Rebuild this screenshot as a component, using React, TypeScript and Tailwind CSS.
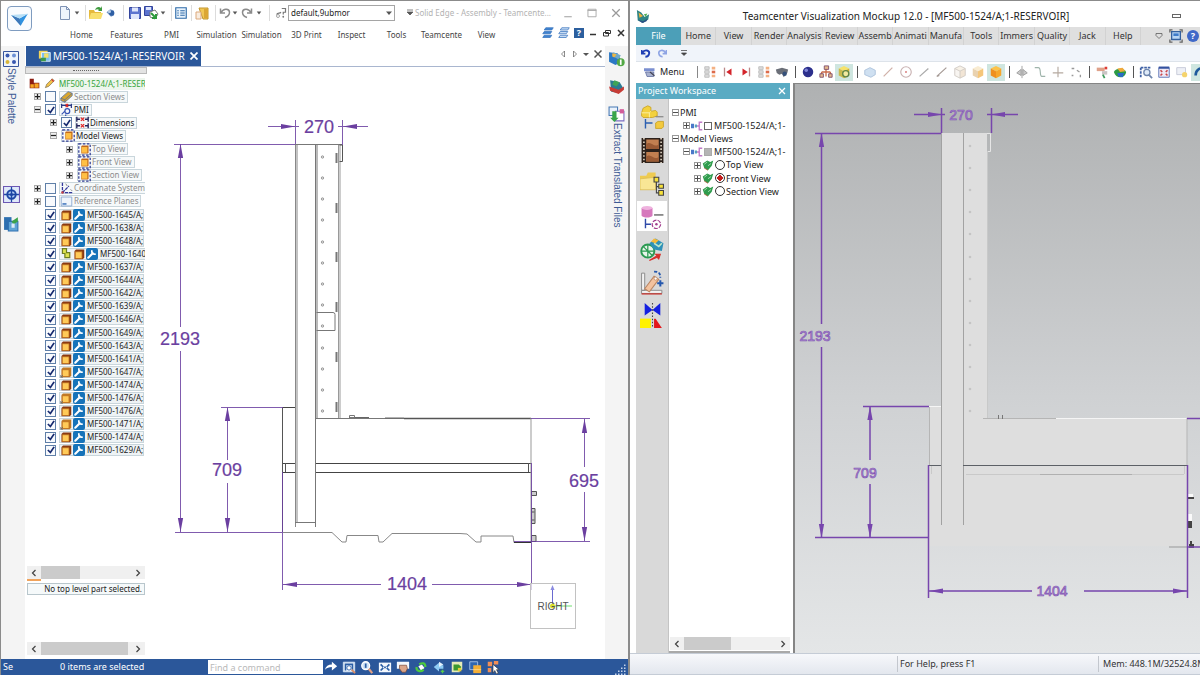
import React from "react";

type IconProps = { className?: string; children?: React.ReactNode };

function Svg({ className = "size-4", children }: IconProps) {
  return (
    <svg viewBox="0 0 16 16" className={`shrink-0 ${className}`} aria-hidden="true" fill="none">
      {children}
    </svg>
  );
}

/* ---------- shared drawing parts ---------- */

function Arrow({ x, y, dir, color }: { x: number; y: number; dir: "l" | "r" | "u" | "d"; color: string }) {
  const rot = { r: 0, d: 90, l: 180, u: 270 }[dir];
  return <path d="M0 0 L-14 -2.6 V2.6 Z" fill={color} transform={`translate(${x} ${y}) rotate(${rot})`} />;
}

const caret = <path d="M5 6h6l-3 4z" fill="#555" />;

const icons = {
  doc: (
    <Svg>
      <path d="M3.5 1.5h6l3 3v10h-9z" fill="#eef4fc" stroke="#7f93b5" />
      <path d="M9.500 1.500v3h3" stroke="#7f93b5" />
    </Svg>
  ),
  open: (
    <Svg>
      <path d="M1 5h5l1 2h6v7H1z" fill="#e5b93c" />
      <path d="M3 8h12l-2 6H1z" fill="#f8df6d" />
      <path d="M7 5c1-3 4-4 6-2l1-2v5h-4l1-1c-1-1-2-1-4 0z" fill="#3f9b3f" />
    </Svg>
  ),
  key: (
    <Svg className="size-3">
      <path d="M2 7l5-4 5 2v6l-4 2z" fill="#6f93c4" />
      <circle cx="9" cy="8" r="3.500" fill="#2f5fa4" />
      <circle cx="6" cy="6" r="2" fill="#b9cfe9" />
    </Svg>
  ),
  save: (
    <Svg>
      <path d="M2.500 2.500h11v11h-11z" fill="#5c74cf" stroke="#34459c" />
      <path d="M5 2.500h6v4H5zM4 9h8v5H4z" fill="#dfe6fb" />
    </Svg>
  ),
  saveAll: (
    <Svg>
      <path d="M1.500 1.500h8v9h-8z" fill="#5c74cf" stroke="#34459c" />
      <path d="M3 2h5v3H3z" fill="#dfe6fb" />
      <path d="M7 7l5-2 3 4-3 5-5-2z" fill="#fff" stroke="#777" />
      <path d="M8 8l5 5m-4 0h4V9" stroke="#2f9a3d" strokeWidth="2" />
    </Svg>
  ),
  list: (
    <Svg className="size-3">
      <path d="M1 1h14v14H1z" fill="#e9f3fc" stroke="#2e6aa8" strokeWidth="1.500" />
      <path d="M3 5h2m2 0h6M3 8h2m2 0h6M3 11h2m2 0h6" stroke="#2e6aa8" strokeWidth="1.500" />
    </Svg>
  ),
  panel: (
    <Svg>
      <path d="M4 3h9v11H8z" fill="#f1c755" stroke="#c2952c" />
      <path d="M1 7h5v7H1z" fill="#f8ece0" stroke="#dca97d" />
      <path d="M9 4h4v9H9z" fill="#dba634" />
    </Svg>
  ),
  undo: (
    <Svg className="size-3">
      <path d="M2 2v6h6M3 7c3-6 11-5 11 0 0 4-3 6-6 7" stroke="#8b8b8b" strokeWidth="2" />
    </Svg>
  ),
  redo: (
    <Svg className="size-3">
      <path d="M14 2v6H8m5-1C10 1 2 2 2 7c0 4 3 6 6 7" stroke="#8b8b8b" strokeWidth="2" />
    </Svg>
  ),
  find: (
    <Svg className="size-3">
      <path d="M9 2h5v5h-3v3M2 10c2-3 4-1 6-3" stroke="#777" strokeWidth="1.600" />
      <circle cx="11" cy="13" r="1.200" fill="#777" />
      <circle cx="4" cy="12" r="2" stroke="#888" />
    </Svg>
  ),
};

function Caret() {
  return (
    <button type="button" aria-label="More options" className="flex w-2 justify-center">
      <Svg className="size-3">{caret}</Svg>
    </button>
  );
}

function SepCell({ className = "w-2" }: { className?: string }) {
  return (
    <span className={`flex justify-center ${className}`}>
      <span className="h-4 w-px bg-[#dcdcdc]" />
    </span>
  );
}

function Tool({ label, className = "w-4", children }: { label: string; className?: string; children: React.ReactNode }) {
  return (
    <button type="button" aria-label={label} className={`flex shrink-0 items-center justify-center ${className}`}>
      {children}
    </button>
  );
}

/* ---------- left window: header ---------- */

const leftMenus = ["Home", "Features", "PMI", "Simulation", "Simulation", "3D Print", "Inspect", "Tools", "Teamcente", "View"];

function Layers({ faded = false }: { faded?: boolean }) {
  return (
    <Svg className="size-3">
      <path d="M5 1h10l-2 3H3zM3 6h10l-2 3H1zM3 11h10l-2 3H1z" fill={faded ? "#c8dcf4" : "#3f83d0"} stroke="#3a74bd" />
    </Svg>
  );
}

function LeftHeader() {
  return (
    <header className="flex h-[45px] shrink-0">
      <button type="button" aria-label="Application menu" className="mt-[5px] ml-[6px] flex size-[25px] items-center justify-center rounded-sm border border-[#7f9cc0] bg-[#f8fbfe]">
        <Svg className="size-[19px]">
          <path d="M1 5l7 3 7-4-6 10z" fill="#2f92e0" />
          <path d="M1 5l7 3 1 6z" fill="#3f78b8" />
          <path d="M1 5l14-1-7 4z" fill="#b8dff6" />
        </Svg>
      </button>
      <div className="ml-[25px] min-w-0 flex-1">
        <div className="flex h-[23px] items-center">
          <Tool label="New">{icons.doc}</Tool>
          <Caret />
          <SepCell />
          <Tool label="Open" className="w-3.5">{icons.open}</Tool>
          <Tool label="Search">{icons.key}</Tool>
          <SepCell />
          <Tool label="Save">{icons.save}</Tool>
          <Tool label="Save all">{icons.saveAll}</Tool>
          <Caret />
          <SepCell />
          <Tool label="Properties" className="w-3">{icons.list}</Tool>
          <SepCell />
          <Tool label="Panels">{icons.panel}</Tool>
          <SepCell />
          <Tool label="Undo" className="w-3">{icons.undo}</Tool>
          <Caret />
          <Tool label="Redo">{icons.redo}</Tool>
          <Caret />
          <SepCell className="w-3" />
          <Tool label="Find" className="w-3">{icons.find}</Tool>
          <div className="ml-px grid w-[107px] shrink-0">
            <select aria-label="Configuration" className="col-start-1 row-start-1 h-4 appearance-none border border-[#a5a5a5] bg-white px-0.5 text-[8px] leading-[14px] text-[#222]">
              <option>default,9ubmor</option>
            </select>
            <Svg className="pointer-events-none col-start-1 row-start-1 mr-0.5 size-2 self-center justify-self-end">
              <path d="M2 5h12l-6 7z" fill="#555" />
            </Svg>
          </div>
          <div className="ml-2.5 flex w-2.5 justify-center">
            <Svg className="size-2"><path d="M2 2h12M2 6h12l-6 6z" stroke="#555" fill="#555" strokeWidth="1.500" /></Svg>
          </div>
          <h1 className="min-w-0 flex-1 truncate text-[8px] text-[#b3b3b3]">Solid Edge - Assembly - Teamcente...</h1>
          <div className="flex">
            <Tool label="Minimize window" className="w-6"><Svg className="size-2.5"><path d="M2 14h12" stroke="#999" strokeWidth="1.500" /></Svg></Tool>
            <Tool label="Maximize window" className="w-6"><Svg className="size-2.5"><path d="M1.500 2h13v12h-13zM1 4h14" stroke="#aaa" strokeWidth="1.500" /></Svg></Tool>
            <Tool label="Close window" className="w-6"><Svg className="size-2.5"><path d="M2 2l12 12M14 2L2 14" stroke="#999" strokeWidth="2" /></Svg></Tool>
          </div>
        </div>
        <div className="flex h-[22px] items-center justify-between">
          <nav className="ml-0.5 flex">
            {leftMenus.map((m, i) => (
              <a key={i} href="#menu" className="w-[45px] text-center text-[8px] whitespace-nowrap text-[#444]">
                {m}
              </a>
            ))}
          </nav>
          <div className="flex items-center gap-1 pr-0.5 pb-1">
            <Tool label="Window styles" className="w-3"><Layers /></Tool>
            <Tool label="Arrange windows" className="w-3"><Layers faded /></Tool>
            <Tool label="Help" className="h-2.5 w-2.5 bg-[#2c5f9e] text-[9px] font-bold text-white">?</Tool>
            <Tool label="Minimize document" className="w-2.5"><Svg className="size-2"><path d="M2 11h12" stroke="#333" strokeWidth="3" /></Svg></Tool>
            <Tool label="Restore document" className="w-2.5"><Svg className="size-2"><path d="M5 3h10v6H5zM1 7h10v7H1z" fill="#fff" stroke="#333" strokeWidth="2" /></Svg></Tool>
            <Tool label="Close document" className="w-2.5"><Svg className="size-2"><path d="M2 2l12 12M14 2L2 14" stroke="#333" strokeWidth="3" /></Svg></Tool>
          </div>
        </div>
      </div>
    </header>
  );
}

/* ---------- left window: tree ---------- */

type Kind = "root" | "section" | "pmi" | "dims" | "views" | "view" | "coord" | "plane" | "part" | "sketch" | "link";
type Row = { label: string; kind: Kind; depth: number; exp?: "+" | "-"; check?: boolean; muted?: boolean };

const parts: [string, Kind][] = [
  ["MF500-1645/A;", "part"], ["MF500-1638/A;", "part"], ["MF500-1648/A;", "part"], ["MF500-1640/A;", "link"],
  ["MF500-1637/A;", "part"], ["MF500-1644/A;", "part"], ["MF500-1642/A;", "part"], ["MF500-1639/A;", "part"],
  ["MF500-1646/A;", "part"], ["MF500-1649/A;", "part"], ["MF500-1643/A;", "part"], ["MF500-1641/A;", "part"],
  ["MF500-1647/A;", "sketch"], ["MF500-1474/A;", "part"], ["MF500-1476/A;", "sketch"], ["MF500-1476/A;", "part"],
  ["MF500-1471/A;", "sketch"], ["MF500-1474/A;", "part"], ["MF500-1629/A;", "part"],
];

const treeRows: Row[] = [
  { label: "Section Views", kind: "section", depth: 0, exp: "+", check: false, muted: true },
  { label: "PMI", kind: "pmi", depth: 0, exp: "-", check: true },
  { label: "Dimensions", kind: "dims", depth: 1, exp: "+", check: true },
  { label: "Model Views", kind: "views", depth: 1, exp: "-" },
  { label: "Top View", kind: "view", depth: 2, exp: "+", muted: true },
  { label: "Front View", kind: "view", depth: 2, exp: "+", muted: true },
  { label: "Section View", kind: "view", depth: 2, exp: "+", muted: true },
  { label: "Coordinate Systems", kind: "coord", depth: 0, exp: "+", check: false, muted: true },
  { label: "Reference Planes", kind: "plane", depth: 0, exp: "+", check: false, muted: true },
  ...parts.map(([label, kind]) => ({ label, kind, depth: 0, check: true })),
];

function PartBox({ sketch = false }: { sketch?: boolean }) {
  return (
    <Svg className="size-3">
      <path d="M2 4l2-2h11v11l-2 2H2z" fill={sketch ? "#c07a26" : "#8a3a12"} />
      <path d="M3 5h9v9H3z" fill="#ffca58" stroke="#b96a1c" />
      {sketch && <path d="M1 15l3-3M1 12v3h3" stroke="#666" />}
    </Svg>
  );
}

function KindIcon({ kind }: { kind: Kind }) {
  switch (kind) {
    case "section":
      return <Svg className="size-[13px]"><path d="M1 10l9-8 5 2v3l-9 8-5-2z" fill="#d9a62e" stroke="#58709c" /><path d="M1 10l5 2 9-8M6 12v3" stroke="#58709c" /></Svg>;
    case "pmi":
      return <Svg className="size-[13px]"><path d="M2 1v5M14 1v5M2 3h12" stroke="#2b3a86" strokeWidth="1.500" /><path d="M7 1l3 4M10 1L7 5" stroke="#d22" strokeWidth="1.500" /><circle cx="9" cy="10" r="3" stroke="#3754b3" strokeWidth="1.500" /><path d="M2 14l4-4M7 14v2" stroke="#3754b3" strokeWidth="1.500" /></Svg>;
    case "dims":
      return <Svg className="size-[13px]"><path d="M1 1v6M15 1v6M1 4h4M11 4h4M1 9v6M15 9v6M1 12h4M11 12h4" stroke="#26265e" strokeWidth="1.700" /><path d="M6 2l4 4M10 2L6 6M6 10l4 4M10 10l-4 4" stroke="#e02a2a" strokeWidth="1.700" /></Svg>;
    case "views":
    case "view":
      return <Svg className="size-[13px]"><rect x="1" y="1" width="14" height="14" stroke="#2f3a93" strokeWidth="1.500" strokeDasharray="3 2" /><path d="M4 4l1-1h8v9l-1 1H4z" fill="#c1691a" /><path d="M4.500 5h7v7h-7z" fill="#ffc044" /></Svg>;
    case "coord":
      return <Svg className="size-[13px]"><path d="M3 1v12h12M3 13L11 5" stroke="#34399c" strokeWidth="1.600" strokeDasharray="4 1" /><circle cx="3" cy="13" r="1.500" fill="#c44" /><path d="M7 2l2 3m4 4l2 2" stroke="#777" /></Svg>;
    case "plane":
      return <Svg className="size-[13px]"><path d="M1.500 2.500h13v11h-13z" fill="#eff5fb" stroke="#7fa0cc" /><path d="M3 11h5" stroke="#4a7cc0" strokeWidth="2" /></Svg>;
    default:
      return <PartBox sketch={kind === "sketch"} />;
  }
}

function Wrench() {
  return (
    <Svg className="ml-px size-3 rounded-xs bg-[#1673b9]">
      <path d="M3 13l6-6" stroke="#fff" strokeWidth="2.800" strokeLinecap="round" />
      <path d="M8 3c-1 3 1 6 5 5" stroke="#fff" strokeWidth="2.400" />
    </Svg>
  );
}

function CheckBox({ label, checked }: { label: string; checked: boolean }) {
  return (
    <label className="grid size-[11px] shrink-0 place-items-center">
      <input
        type="checkbox"
        aria-label={label}
        defaultChecked={checked}
        className="peer col-start-1 row-start-1 size-[11px] appearance-none border border-[#5f7fa8] bg-[#f8fafd]"
      />
      <Svg className="pointer-events-none col-start-1 row-start-1 hidden size-2.5 peer-checked:block">
        <path d="M3 8l4 4 6-9" stroke="#15296e" strokeWidth="2.800" />
      </Svg>
    </label>
  );
}

function Expander({ sign }: { sign: "+" | "-" }) {
  return (
    <button type="button" aria-label={sign === "+" ? "Expand" : "Collapse"} className="flex size-[7px] shrink-0 items-center justify-center border border-[#a9a9a9] bg-[#f0f0f0]">
      <Svg className="size-[5px]">
        <path d={sign === "+" ? "M0 8h16M8 0v16" : "M0 8h16"} stroke="#222" strokeWidth="4" />
      </Svg>
    </button>
  );
}

function TreeRow({ row }: { row: Row }) {
  const isPart = row.kind === "part" || row.kind === "sketch" || row.kind === "link";
  const indent = ["pl-[7px]", "pl-[23px]", "pl-[39px]"][row.depth];
  return (
    <li className={`flex min-h-0 items-center ${indent}`}>
      <span className="flex w-[11px] shrink-0">{row.exp && <Expander sign={row.exp} />}</span>
      {row.check !== undefined && (
        <span className="flex w-3.5 shrink-0">
          <CheckBox label={`Show ${row.label}`} checked={row.check} />
        </span>
      )}
      <span className={`flex h-3 shrink-0 items-center border border-[#c9d6dc] whitespace-nowrap ${isPart ? "bg-[#eef3f5]" : "bg-[#f6f9fa] pr-0.5"}`}>
        {row.kind === "link" && (
          <Svg className="size-[13px]"><path d="M3 2h5v5h4v6H6V8H3z" fill="#dbe24f" stroke="#6d7d22" strokeWidth="1.500" /></Svg>
        )}
        <KindIcon kind={row.kind} />
        {isPart && <Wrench />}
        <span className={`text-[8px] leading-[10px] ${isPart ? "pl-0.5 text-[#222]" : row.muted ? "pl-px text-[#8d8d8d]" : "pl-px text-[#222]"}`}>{row.label}</span>
      </span>
    </li>
  );
}

function HScroll({ thumb, label }: { thumb: string; label: string }) {
  return (
    <div className="flex h-[13px] items-stretch bg-[#f0f0f0]" role="group" aria-label={label}>
      <Tool label="Scroll left" className="w-3.5"><Svg className="size-2"><path d="M11 2L5 8l6 6" stroke="#444" strokeWidth="2.500" /></Svg></Tool>
      <div className="flex-1"><div className={`h-full bg-[#cbcbcb] ${thumb}`} /></div>
      <Tool label="Scroll right" className="w-3.5"><Svg className="size-2"><path d="M5 2l6 6-6 6" stroke="#444" strokeWidth="2.500" /></Svg></Tool>
    </div>
  );
}

function LeftTree() {
  return (
    <aside className="flex w-[122px] shrink-0 flex-col">
      <div className="flex h-[7px] shrink-0 items-center justify-center border border-[#b9b9b9] bg-[#e3e3e3]">
        <span className="w-[26px] border-t border-dotted border-[#666]" />
      </div>
      <div className="mt-[3px] mr-0.5 ml-0.5 shrink-0 overflow-hidden">
        <ul className="grid h-[380px] auto-rows-fr">
          <li className="flex items-center gap-1 pl-0.5">
            <Svg className="size-[11px]"><path d="M1 1h6v6h8v8H1z" fill="#8c1d12" /><path d="M8 8h6v6H8zM2 9h5v5H2z" fill="#f5a623" /></Svg>
            <Svg className="size-[11px]"><path d="M2 14l2-5 8-8 3 3-8 8z" fill="#f2c34a" stroke="#7a6a4a" /><path d="M11 2l3 3" stroke="#c33" strokeWidth="2" /></Svg>
            <span className="bg-[#edf6ed] text-[8px] leading-[12px] whitespace-nowrap text-[#35a53a]">MF500-1524/A;1-RESERVOIR</span>
          </li>
          {treeRows.map((row, i) => (
            <TreeRow key={i} row={row} />
          ))}
        </ul>
      </div>
      <div className="mt-auto mr-0.5 ml-0.5 shrink-0 pb-1">
        <HScroll label="Tree scroll" thumb="w-[43%]" />
        <div className="h-0.5 w-3.5 bg-[#f0a35c]" />
        <p className="mt-0.5 h-3 border border-[#b8c6cc] bg-[#f5f9fa] pr-0.5 text-right text-[8px] leading-[10px] whitespace-nowrap text-[#222]">No top level part selected.</p>
        <div className="mt-[47px]">
          <HScroll label="Details scroll" thumb="w-[97%]" />
        </div>
      </div>
    </aside>
  );
}

/* ---------- left window: drawing ---------- */

const VIOLET = "#6b3fa0";
const holes = [157, 178, 199, 220, 242, 263, 284, 305, 326, 348, 369, 390, 411];
const hinges = [153, 203, 252, 302, 352, 402];

function LeftDrawing() {
  return (
    <svg viewBox="147 67 458 592" preserveAspectRatio="xMinYMin meet" className="h-full w-full" role="img" aria-label="Right view of reservoir with dimensions">
      <g fill="none" stroke="#777" strokeWidth="1">
        <path d="M295.500 144V527M297 144V522" stroke="#888" />
        <path d="M315.500 144V527M317 144V418" stroke="#777" />
        <path d="M295 144.500H342M295 522.500H316" />
        <path d="M338.500 145V418M340 145V418" stroke="#999" />
        <path d="M339.500 145H342.500V161.500H339.500" stroke="#555" />
        <path d="M316.500 312.500H333q2 0 2 2V330.500H316.500" />
        <path d="M316 418.500H404" />
        <path d="M404 418.500H531" stroke="#555" strokeWidth="1.500" />
        <path d="M385 418H404M349 417.500h20" stroke="#666" strokeWidth="1" />
        <path d="M349.500 415.500h5v2h-5z" stroke="#777" />
        <path d="M283 407.500H295M283 463.500H295M283 472.500H295M316 463.500H531M316 472.500H531" stroke="#444" />
        <path d="M282.500 407V532M285.500 463V472M528.500 463V472" stroke="#555" />
        <path d="M531 418V542" stroke="#999" />
        <path d="M283 532.500H332L342 542H346L347 535.500H378L379 542H383L392 533.500H460L467 534 476 542H481V536H513L514 542.500" stroke="#888" />
        <path d="M514 542.500H531" stroke="#333" />
        <path d="M531.500 491.500h5v4h-5zM531.500 508.500h3.500v15h-3.500zM531.500 512h3M531.500 520h3M531.500 535.500h4.500v6h-4.500z" stroke="#555" fill="#ccc" />
        {hinges.map((y) => (
          <path key={y} d={`M336.500 ${y}v10`} stroke="#777" strokeWidth="2" />
        ))}
      </g>
      {holes.map((y) => (
        <circle key={y} cx="322.500" cy={y} r="1.200" fill="#ddd" stroke="#888" strokeWidth="0.800" />
      ))}
      <g stroke={VIOLET} strokeWidth="1" fill="none" opacity="0.850">
        <path d="M268 126.500H299M338 126.500H368M295.500 120V144M342.500 120V145" />
        <path d="M174 144.500H295M180.500 144V327M180.500 351V532M175 532.500H283" />
        <path d="M221 407.500H283M227.500 407V460M227.500 483V532" />
        <path d="M531 418.500H590M514 541.500H590M584.500 418V467M584.500 492V541" />
        <path d="M282.500 472V590M531.500 463V590M283 584.500H381M432 584.500H531" />
      </g>
      <Arrow x={295} y={126.500} dir="r" color={VIOLET} />
      <Arrow x={343} y={126.500} dir="l" color={VIOLET} />
      <Arrow x={180.500} y={144} dir="u" color={VIOLET} />
      <Arrow x={180.500} y={532} dir="d" color={VIOLET} />
      <Arrow x={227.500} y={407} dir="u" color={VIOLET} />
      <Arrow x={227.500} y={532} dir="d" color={VIOLET} />
      <Arrow x={584.500} y={419} dir="u" color={VIOLET} />
      <Arrow x={584.500} y={541} dir="d" color={VIOLET} />
      <Arrow x={283} y={584.500} dir="l" color={VIOLET} />
      <Arrow x={531} y={584.500} dir="r" color={VIOLET} />
      <g fill={VIOLET} stroke={VIOLET} strokeWidth="0.200" className="font-['Liberation_Sans',Arial,sans-serif] text-[18px]" textAnchor="middle">
        <text x="319" y="133">270</text>
        <text x="180" y="345">2193</text>
        <text x="227" y="476">709</text>
        <text x="584" y="487">695</text>
        <text x="407" y="590">1404</text>
      </g>
      <rect x="530.500" y="583.500" width="45" height="45" fill="#fff" fillOpacity="0.700" stroke="#c2c2c2" />
      <path d="M552.500 606V588" stroke="#6a6ad0" />
      <path d="M552.500 585l-2 5h4z" fill="#8a8ae0" />
      <path d="M553 606H572" stroke="#6fdd6f" />
      <circle cx="552.500" cy="606" r="2.500" fill="#d9e02a" />
      <text x="553" y="610" textAnchor="middle" fill="#555" className="font-['Liberation_Sans',Arial,sans-serif] text-[10px]">RIGHT</text>
    </svg>
  );
}

/* ---------- left window: rails and status ---------- */

function LeftRail() {
  return (
    <aside className="flex w-[24px] shrink-0 flex-col items-center bg-[#f4f4f4] pt-[5px] pr-1">
      <Tool label="Style palette" className="w-4">
        <Svg className="size-[16px]">
          <path d="M.5.5h15v15H.5z" fill="#eef3fb" stroke="#38569e" />
          <circle cx="4.500" cy="4.500" r="2" fill="#3858b0" /><circle cx="11" cy="4.500" r="2" fill="#6c90d5" /><circle cx="4.500" cy="11" r="2" fill="#d7b53a" /><circle cx="11" cy="11" r="2" fill="#3858b0" />
        </Svg>
      </Tool>
      <span className="mt-px h-[118px] font-['Liberation_Sans',Arial,sans-serif] text-[10px] leading-3 whitespace-nowrap text-[#3d5a94] [writing-mode:vertical-rl]">Style Palette</span>
      <Tool label="Sensors" className="w-4">
        <Svg className="size-[17px]">
          <path d="M.5.5h15v15H.5z" fill="#dfe9fa" stroke="#6c58b4" />
          <circle cx="8" cy="8" r="4" fill="#a9c6f0" stroke="#1d46a4" strokeWidth="1.800" />
          <path d="M8 1v14M1 8h14" stroke="#1d46a4" strokeWidth="1.200" />
          <circle cx="8" cy="8" r="1.500" fill="#1d46a4" />
        </Svg>
      </Tool>
      <Tool label="Part library" className="mt-3 w-4">
        <Svg className="size-[17px]">
          <path d="M1 2h7v12H1z" fill="#2d6fb0" /><path d="M5 6h9v9H5z" fill="#5fa4d6" stroke="#2d6fb0" />
          <path d="M8 6l6-4v4l-4 3z" fill="#3ba34b" /><path d="M8 8h3v4H8z" fill="#dcebf7" />
        </Svg>
      </Tool>
    </aside>
  );
}

function RightRail() {
  return (
    <aside className="flex w-[23px] shrink-0 flex-col items-center bg-[#f4f4f4] pt-1">
      <Tool label="Item info" className="w-4">
        <Svg className="size-[17px]">
          <path d="M1 2l8 1 4 8-6 3-6-3z" fill="#2c78c4" /><path d="M5 2l7 3-2 4-5-3z" fill="#6fa9c9" /><path d="M4 3l4 1-2 3-2-1z" fill="#edb643" />
          <circle cx="12" cy="11.500" r="3.700" fill="#53a845" /><path d="M12 9v5" stroke="#fff" strokeWidth="1.600" />
        </Svg>
      </Tool>
      <Tool label="Publish" className="mt-[11px] w-4">
        <Svg className="size-[17px]">
          <path d="M2 2l9 2 3 5-4 5-7-1z" fill="#2b7b93" /><path d="M1 8l9 3 5-3v3l-5 4-8-3z" fill="#c63c36" /><path d="M6 2l5 2-3 4-4-2z" fill="#3ea457" />
        </Svg>
      </Tool>
      <Tool label="Extract translated files" className="mt-[11px] w-4">
        <Svg className="size-[17px]">
          <path d="M1 1h8v8H1z" fill="#eaf2fb" stroke="#4678b4" /><path d="M7 5h8v9H7z" fill="#fff" stroke="#7a6cc0" />
          <path d="M4 5v6H2l4 4 4-4H8V5z" fill="#38a54a" /><path d="M11 3h4v4h-4z" fill="#d25c9a" />
        </Svg>
      </Tool>
      <span className="font-['Liberation_Sans',Arial,sans-serif] text-[10px] leading-3 whitespace-nowrap text-[#3d5a94] [writing-mode:vertical-rl]">Extract Translated Files</span>
    </aside>
  );
}

const statusIcons: [string, React.ReactNode][] = [
  ["Run command", <path key="a" d="M1 11c1-4 4-6 8-6V2l6 5-6 5V8C6 8 3 9 1 11z" fill="#fff" />],
  ["Zoom area", <g key="b"><path d="M1.500 2.500h13v11h-13z" fill="#e8f1fb" stroke="#cfe0f2" /><path d="M4 12V5h8v7" stroke="#2b5fa6" strokeWidth="1.800" /><circle cx="8" cy="9" r="2.500" fill="#fff" stroke="#2b5fa6" /><path d="M11 11l4 4" stroke="#d98b62" strokeWidth="2" /></g>],
  ["Zoom", <g key="c"><circle cx="6.500" cy="6.500" r="4.500" fill="#cfe2f6" stroke="#fff" strokeWidth="1.500" /><path d="M6.500 4v5" stroke="#2b5fa6" strokeWidth="2" /><path d="M10 10l4 5" stroke="#e2a083" strokeWidth="2.500" /></g>],
  ["Fit", <g key="d"><path d="M1 3h14v11H1z" fill="#f4f8fd" /><path d="M3 5l3 3M13 5l-3 3M3 12l3-3M13 12l-3-3M7 8.500h2" stroke="#2b5fa6" strokeWidth="2" /></g>],
  ["Pan", <g key="e"><path d="M1 2h14v8H1z" fill="#f4f8fd" /><path d="M4 6h8l1 4-2 4H7L4 10z" fill="#dba589" stroke="#7a4a38" strokeWidth=".8" /></g>],
  ["Rotate", <g key="f"><path d="M5 7l4-2 3 4-4 3z" fill="#fff" /><path d="M3 8c-1 5 5 6 8 3M13 8c0-5-4-5-7-3" stroke="#4ccb3d" strokeWidth="2.500" /></g>],
  ["Look at face", <g key="g"><path d="M2 8l6-5v3h5v4H8v3z" fill="#8ecbf3" /><path d="M8 2l5 3-5 3z" fill="#e4f3fd" /><path d="M12 11v4M10 13h4" stroke="#56cb4c" strokeWidth="1.500" /></g>],
  ["View style", <g key="h"><path d="M2 2h12v9h-3v3H2z" fill="#e6ecb8" /><path d="M4 5h6l3 3-3 4H4z" fill="#3c9a2e" /><path d="M9 9h4v4H9z" fill="#e4cf3c" /></g>],
  ["Layers", <g key="i"><path d="M2 2h9v9H2z" fill="#2f66b1" stroke="#a9c6ea" /><path d="M6 6h9v9H6z" fill="#f3ae36" /><path d="M6 11h9" stroke="#ffd682" /></g>],
  ["Select tool", <g key="j"><path d="M2 2h5v5H2zM9 1h5v4H9zM2 9h4v5H2z" fill="#f28f56" /><path d="M8 5v10l2-3 2 4 2-1-2-4h3z" fill="#fff" stroke="#333" strokeWidth=".7" /></g>],
];

function LeftStatus() {
  return (
    <footer className="flex h-4 shrink-0 items-center bg-[#2b579a] text-white">
      <span className="w-[59px] pl-0.5 text-[9px]">Se</span>
      <span className="w-[148px] text-[9px] whitespace-nowrap">0 items are selected</span>
      <input aria-label="Find a command" placeholder="Find a command" className="h-3.5 w-[115px] bg-white px-0.5 text-[9px] text-[#333] outline-none placeholder:text-[#b9b9b9]" />
      <div className="flex gap-0.5">
        {statusIcons.map(([label, art]) => (
          <Tool key={label} label={label}><Svg className="size-3.5">{art}</Svg></Tool>
        ))}
      </div>
      <Svg className="mr-px ml-auto size-3 self-end">
        {[[12, 3], [12, 7], [8, 7], [12, 11], [8, 11], [4, 11], [12, 15], [8, 15], [4, 15], [0, 15]].map(([x, y], i) => (
          <rect key={i} x={x} y={y - 1} width="2" height="2" fill="#c5d3ea" />
        ))}
      </Svg>
    </footer>
  );
}

function LeftWindow() {
  return (
    <section className="flex w-[52.500%] shrink-0 flex-col border-t border-r-2 border-l border-[#8b8b8b] bg-white">
      <LeftHeader />
      <div className="flex min-h-0 flex-1">
        <LeftRail />
        <div className="flex min-w-0 flex-1 flex-col">
          <div className="flex h-[21px] shrink-0 items-stretch justify-between border-b border-[#a9b6cf]">
            <div className="ml-px flex w-[175px] items-center bg-[#2b579a] pl-3 text-white">
              <Svg className="size-[14px]"><path d="M1 2h10v9H1z" fill="#f2d45a" /><path d="M4 4h10v10H4z" fill="#7fc0ec" stroke="#e9f4fc" /><path d="M7 5h5v5H7z" fill="#f5e06a" /><path d="M3 10h6v4H3z" fill="#3d9a49" /></Svg>
              <span className="flex-1 pl-px text-[10px] whitespace-nowrap">MF500-1524/A;1-RESERVOIR</span>
              <Tool label="Close tab" className="w-3.5"><Svg className="size-2"><path d="M1 1l14 14M15 1L1 15" stroke="#fff" strokeWidth="3.500" /></Svg></Tool>
            </div>
            <div className="flex items-center pb-1">
              <Tool label="Previous tab" className="w-3"><Svg className="size-2"><path d="M11 2v12L5 8z" stroke="#666" strokeWidth="1.500" /></Svg></Tool>
              <Tool label="Next tab" className="w-3"><Svg className="size-2"><path d="M5 2v12l6-6z" stroke="#666" strokeWidth="1.500" /></Svg></Tool>
              <Tool label="Tab list" className="w-2.5"><Svg className="size-2"><path d="M2 6h12l-6 6z" fill="#555" /></Svg></Tool>
              <Tool label="Close document tab" className="w-3.5"><Svg className="size-2"><path d="M1 1l14 14M15 1L1 15" stroke="#555" strokeWidth="3" /></Svg></Tool>
            </div>
          </div>
          <div className="flex min-h-0 flex-1">
            <LeftTree />
            <main className="min-w-0 flex-1"><LeftDrawing /></main>
          </div>
        </div>
        <RightRail />
      </div>
      <LeftStatus />
    </section>
  );
}

/* ---------- right window ---------- */

const ribbonTabs = ["Home", "View", "Render", "Analysis", "Review", "Assemb", "Animati", "Manufa", "Tools", "Immers", "Quality", "Jack", "Help"];

const cube = (top: string, left: string, right: string) => (
  <g>
    <path d="M8 1l6 3-6 3-6-3z" fill={top} /><path d="M2 4l6 3v8l-6-3z" fill={left} /><path d="M14 4L8 7v8l6-3z" fill={right} />
  </g>
);
const listArt = <g><path d="M2 2h5v3H2zM2 6.500h5v3H2zM2 11h5v3H2z" fill="#ddd" stroke="#bbb" /><path d="M10 2h4v3h-4zM10 11h4v3h-4z" fill="#f4b183" /><path d="M10 6.500h4v3h-4z" fill="#dd6a4a" /></g>;

type BarItem = "sep" | { name: string; art: React.ReactNode; on?: boolean };
const bar: BarItem[] = [
  { name: "Structure list", art: listArt },
  { name: "Previous", art: <g><path d="M4 3v10" stroke="#b88" strokeWidth="1.500" /><path d="M12 4v8L6 8z" fill="#d4242b" /></g> },
  { name: "Next", art: <g><path d="M12 3v10" stroke="#b88" strokeWidth="1.500" /><path d="M4 4v8l6-4z" fill="#d4242b" /></g> },
  { name: "Item list", art: listArt },
  { name: "Binoculars", art: <g><path d="M1 5l7-2 7 2-1 4-4 5-2-4-3 1-3-2z" fill="#6b6f78" /><circle cx="11" cy="10" r="2.500" fill="#35507a" /></g> },
  "sep",
  { name: "Shaded", art: <g><circle cx="8" cy="8" r="6" fill="#2c2f8c" /><circle cx="6" cy="6" r="2" fill="#7f85d8" /></g> },
  { name: "Structure", art: <g><path d="M3 8h10M8 3v10M3 8v4M13 8v4" stroke="#c96a4a" strokeWidth="1.500" /><path d="M6 1h5v4H6zM1 10h4v4H1zM11 10h4v4h-4z" fill="#e6b98c" stroke="#7a4a6a" /></g> },
  { name: "Model", on: true, art: <g>{cube("#f6e26a", "#c9b94d", "#d5b12b")}<circle cx="10" cy="10" r="3.500" fill="#f2e9a0" stroke="#5d8448" strokeWidth="1.500" /></g> },
  "sep",
  { name: "Surface", art: <path d="M2 6l6-3 6 3v5l-5 3-7-3z" fill="#cfe0f1" stroke="#a9c0da" /> },
  { name: "Line", art: <path d="M3 13L13 3" stroke="#d0b0a8" strokeWidth="1.500" /> },
  { name: "Circle", art: <g><circle cx="8" cy="8" r="6" stroke="#c9b2b2" strokeWidth="1.300" /><circle cx="8" cy="8" r="1.200" fill="#d88" /></g> },
  { name: "Segment", art: <path d="M3 13L13 4" stroke="#a9a9a9" strokeWidth="1.400" /> },
  { name: "Edge", art: <path d="M2 13L13 3M2 13l3-1" stroke="#a59a95" strokeWidth="1.400" /> },
  { name: "Wire cube", art: <g opacity=".8">{cube("#f7efe2", "#f7f3ee", "#efdfcb")}<path d="M8 1l6 3v8l-6 3-6-3V4z M2 4l6 3 6-3M8 7v8" stroke="#c5bdb5" /></g> },
  { name: "Lit cube", art: cube("#f9ecd2", "#e9d2b0", "#f5c67a") },
  { name: "Solid cube", on: true, art: cube("#fcc34a", "#ef8f1e", "#f7a62a") },
  "sep",
  { name: "Mirror", art: <path d="M8 1v14M2 9l5-4v7zM14 9L9 5v7z" fill="#c9c9c9" stroke="#9a9a9a" /> },
  { name: "Curve", art: <path d="M2 3h4c4 0 1 10 4 10h4" stroke="#9fb4ab" strokeWidth="1.300" /> },
  { name: "Crosshair", art: <path d="M8 2v12M2 9h12" stroke="#b5a9a0" strokeWidth="1.300" /> },
  { name: "Points", art: <path d="M3 4h3m3 2l3 2m1 3v3M3 12h2" stroke="#999" strokeWidth="1.500" /> },
  "sep",
  { name: "Paint", art: <g><path d="M2 3h9v4H2z" fill="#dfa18a" /><path d="M8 7h6v4H8z" fill="#c9c4c4" /><path d="M11 2h3v3h-3z" fill="#de3d34" /><path d="M9 11l2 4" stroke="#3e9b5b" strokeWidth="2" /></g> },
  { name: "Globe", art: <g><path d="M1 8c2-5 12-5 14 0-1 8-12 8-14 0z" fill="#2c9a43" /><path d="M5 9l8 0-2 5-5-1z" fill="#2a6ac4" /><path d="M5 4l6-1 3 4-6 1z" fill="#f0a93c" /></g> },
  "sep",
  { name: "Zoom window", art: <g><path d="M2 3h12M2 3v11" stroke="#3f62a6" strokeWidth="2" strokeDasharray="3 1" /><circle cx="9" cy="8.500" r="3.500" fill="#e0ebf8" stroke="#6f86ad" strokeWidth="1.500" /><path d="M11 11l4 4" stroke="#6f86ad" strokeWidth="2" /></g> },
  { name: "Fit all", art: <g><path d="M2 3h12v11H2z" fill="#eee8f5" stroke="#5670b5" /><path d="M2 3h12" stroke="#34519f" strokeWidth="2.500" /><path d="M4 6l2 2M12 6l-2 2M4 12l2-2M12 12l-2-2" stroke="#c9474a" strokeWidth="1.800" /></g> },
  { name: "Snapshot", art: <g><path d="M2 3h10v8H2z" fill="#eef0f6" stroke="#c3c7d6" /><circle cx="11" cy="11" r="3" fill="#f5d36c" /></g> },
  { name: "Orbit", on: true, art: <path d="M3 12c0-6 4-9 10-8" stroke="#1f5a9c" strokeWidth="3" /> },
];

const workspaceTabs: [string, React.ReactNode][] = [
  ["Assembly structure", <g key="a"><path d="M2 2l3-1.500 2 1V4l3-.5 1 1V7L8 8H2L1 7V5z" fill="#f3d13e" stroke="#c79f1e" strokeWidth=".5" /><path d="M1 5h5v3M6 5l1-1" stroke="#fbf0a8" strokeWidth=".6" /><path d="M10 11.500l1.500-1H15V14l-1 1h-4z" fill="#f3c93e" stroke="#c79f1e" strokeWidth=".5" /><path d="M3.500 9v6M3.500 11.500H8" stroke="#2b5fb0" strokeWidth=".9" /><path d="M10 7.500h5" stroke="#888" strokeWidth=".8" /></g>],
  ["Film strip", <g key="b"><path d="M1 0h14v16H1z" fill="#2c211b" /><path d="M4 1h8v6H4zM4 9h8v6H4z" fill="#c27f50" /><path d="M4 4c3-3 5 3 8 0v3H4zM4 12c3-3 5 3 8 0v3H4z" fill="#9a5a34" /><path d="M2.500 0v16M13.500 0v16" stroke="#e8dccb" strokeWidth="1" strokeDasharray="1 1.200" /></g>],
  ["Folders", <g key="c"><path d="M0 3h4l1-2h5v9l-10 2z" fill="#eecb52" /><path d="M0 5l10-1v8H0z" fill="#f9e695" stroke="#dcbc52" strokeWidth=".5" /><path d="M9 4h3v3H9zM12 8.500h3v2.500h-3zM12 12.500h3v3h-3z" fill="#f7e13a" stroke="#444" strokeWidth=".7" /><path d="M10.500 7v7H12M10.500 10H12" stroke="#444" strokeWidth=".7" /></g>],
  ["Product manufacturing views", <g key="d"><path d="M1 2.500h7v5c-1 1.500-6 1.500-7 0z" fill="#d678bd" /><ellipse cx="4.500" cy="2.500" rx="3.500" ry="1.300" fill="#efb2de" /><path d="M3.500 9.500v6M3.500 13H7" stroke="#2f4aa8" strokeWidth=".9" /><path d="M9 7h6" stroke="#555" strokeWidth=".8" /><circle cx="10.500" cy="13" r="2.700" stroke="#a23f8f" strokeWidth=".8" strokeDasharray="2.500 .8" /><circle cx="10.500" cy="13" r=".8" fill="#a23f8f" /></g>],
  ["Markups", <g key="e"><circle cx="5" cy="9" r="4.200" fill="#e8f5ea" stroke="#2b9a52" strokeWidth="1.200" /><path d="M1 9h8M5 5v8M2 6l6 6" stroke="#2b9a52" strokeWidth=".8" /><path d="M6 4l4-3 5 3-1 5-5-1z" fill="#2f91b8" /><path d="M9 4l3 2 2-2" stroke="#bfe6c8" strokeWidth="1" /><path d="M9 1l3 1-2 2-3-1z" fill="#f5b93a" /><path d="M6 15l5-3-1-1h3l-1 3-1-1z" fill="#d6302b" stroke="#d6302b" strokeWidth=".7" /></g>],
  ["Motion", <g key="f"><path d="M1 2h2v11H1zM1 13h13v2H1z" fill="#f2f2f2" stroke="#8a8a8a" strokeWidth=".6" /><path d="M3 12l6-8 3 2-6 8z" fill="#f3c29e" stroke="#b98563" strokeWidth=".7" /><circle cx="10" cy="5.500" r="1" fill="#fff" stroke="#b98563" strokeWidth=".5" /><path d="M9 1c3 0 4 1 4 4" stroke="#2457ad" strokeWidth="1.200" strokeDasharray="2 1" /><path d="M11 8.500h4M13 6.500v4" stroke="#2457ad" strokeWidth="1.300" /><path d="M1 15.300h13" stroke="#c9302b" strokeWidth=".8" /></g>],
  ["Compare", <g key="g"><path d="M3 0l5 4.500L13 0v8L8 4.500 3 8z" fill="#1420e0" /><path d="M0 10h7v6H0z" fill="#fff200" /><path d="M9 10h1l4 6H9z" fill="#e3171b" /><path d="M8 0v16" stroke="#444" strokeWidth=".7" strokeDasharray="1 1" /></g>],
];

function Radio({ label, checked = false }: { label: string; checked?: boolean }) {
  return (
    <label className="flex items-center gap-px">
      <input
        type="radio"
        name="model-view"
        defaultChecked={checked}
        className="size-2.5 appearance-none rounded-full border border-[#333] bg-white checked:bg-[radial-gradient(circle,#c21c1c_45%,#fff_50%)]"
      />
      {label}
    </label>
  );
}

function SmallExp({ sign }: { sign: "+" | "-" }) {
  return (
    <button type="button" aria-label={sign === "+" ? "Expand" : "Collapse"} className="flex size-[7px] shrink-0 items-center justify-center border border-[#999] bg-white">
      <Svg className="size-[5px]"><path d={sign === "+" ? "M0 8h16M8 0v16" : "M0 8h16"} stroke="#444" strokeWidth="3" /></Svg>
    </button>
  );
}

function ModelGlyph() {
  return <Svg className="size-3"><path d="M0 5h4v6H0z" fill="#4a78c9" /><path d="M5 6h3v4H5z" fill="#59a0be" /><path d="M8 8h3M15 3h-4v10h4" stroke="#c07bc8" strokeWidth="1.800" /></Svg>;
}

function ViewGlyph() {
  return <Svg className="size-3"><path d="M1 6l6-4 4 2 4-2-2 7-5 6-5-3z" fill="#2f9c4d" /><path d="M3 7l4-3M8 9l4-3" stroke="#a9dbb0" strokeWidth="1.200" /><path d="M3 12l5 3" stroke="#b4512f" /></Svg>;
}

function Workspace() {
  return (
    <aside className="flex w-[154px] shrink-0 flex-col">
      <div className="flex h-4 shrink-0 items-center justify-between bg-[#5aabc3] px-0.5 text-white">
        <h2 className="text-[9px]">Project Workspace</h2>
        <Tool label="Close workspace" className="w-3"><Svg className="size-2"><path d="M2 2l12 12M14 2L2 14" stroke="#fff" strokeWidth="2.500" /></Svg></Tool>
      </div>
      <div className="flex min-h-0 flex-1">
        <div className="flex w-[33px] shrink-0 flex-col items-center gap-[3px] border-r border-[#c4c4c4] bg-[#d9d9d9] pt-[3px]">
          {workspaceTabs.map(([label, art], i) => (
            <Tool key={label} label={label} className={`h-[30px] w-[30px] ${i === 3 ? "bg-white" : ""}`}>
              <Svg className="size-[25px]">{art}</Svg>
            </Tool>
          ))}
        </div>
        <div className="flex min-w-0 flex-1 flex-col bg-white">
          <ul className="mt-[7px] grid h-[92px] auto-rows-fr overflow-hidden text-[9px] whitespace-nowrap text-[#222]">
            <li className="flex items-center gap-px pl-[3px]"><SmallExp sign="-" />PMI</li>
            <li className="flex items-center gap-px pl-3.5">
              <SmallExp sign="+" /><ModelGlyph />
              <label className="flex items-center gap-px"><input type="checkbox" className="mr-px size-2 appearance-none border border-[#666] bg-white" />MF500-1524/A;1-</label>
            </li>
            <li className="flex items-center gap-px pl-[3px]"><SmallExp sign="-" />Model Views</li>
            <li className="flex items-center gap-px pl-3.5">
              <SmallExp sign="-" /><ModelGlyph />
              <label className="flex items-center gap-px"><input type="checkbox" className="mr-px size-2 appearance-none border border-[#aaa] bg-[#b5b5b5]" />MF500-1524/A;1-</label>
            </li>
            <li className="flex items-center gap-px pl-[25px]"><SmallExp sign="+" /><ViewGlyph /><Radio label="Top View" /></li>
            <li className="flex items-center gap-px pl-[25px]"><SmallExp sign="+" /><ViewGlyph /><Radio label="Front View" checked /></li>
            <li className="flex items-center gap-px pl-[25px]"><SmallExp sign="+" /><ViewGlyph /><Radio label="Section View" /></li>
          </ul>
          <div className="mt-auto border-b-2 border-[#a9a9a9] pb-px pl-px">
            <HScroll label="Workspace scroll" thumb="w-[51%]" />
          </div>
        </div>
      </div>
    </aside>
  );
}

const PURPLE = "#7746ad";
const rHoles = [146, 168, 190, 212, 234, 257, 279, 301, 323, 345, 367, 389, 411];

function RightDrawing() {
  return (
    <svg viewBox="795 84 405 569" preserveAspectRatio="xMinYMin meet" className="h-full w-full" role="img" aria-label="Front view of reservoir with dimensions">
      <path d="M941 133H987V418H1187V546H929V406H941Z" fill="#dedede" />
      <g fill="none">
        <path d="M987 133.500H990.500V151.500H987" stroke="#e6e6e6" />
        <path d="M987.500 151V418" stroke="#c8c9c9" />
        <path d="M941.500 133V525M963.500 133V525" stroke="#a2a2a2" />
        <path d="M929 406.500H941M1056 418.500H1187" stroke="#f5f5f5" />
        <path d="M983 418.500H1056M929.500 407V465M1187 418V465" stroke="#b5b5b5" />
        <path d="M929 465.500H941M963 465.500H1187" stroke="#5c6066" />
        <path d="M931.500 466V474M1184.500 466V474M966 474.500H1184" stroke="#c9c9c9" />
        <path d="M1040 474.500H1132" stroke="#b0b0b0" />
        <path d="M998.500 415v4M1002.500 415v4" stroke="#777" />
        <path d="M1169 547H1187" stroke="#999" />
      </g>
      <path d="M1188 494h5v3h-5zM1188 514h4v7h-4z" fill="#fafafa" />
      <path d="M1188 497h6v2h-6zM1188 521h4v7h-4zM1189 544h5v4h-5zM1190 541h2v3h-2z" fill="#444" />
      {rHoles.map((y) => (
        <circle key={y} cx="970" cy={y} r="1.300" fill="#c4c4c4" />
      ))}
      <g stroke={PURPLE} strokeWidth="1.500" fill="none">
        <path d="M914 114.500H945M987 114.500H1018M941.500 108V133M991.500 108V133" />
        <path d="M815 133.500H941M815 537.500H929M821.500 133V324M821.500 347V537" />
        <path d="M863 406.500H929M870 407V460M870 484V537" />
        <path d="M928.500 465V598M1187.500 465V598M929 591H1032M1084 591H1187" />
        <path d="M1187 418.500H1200M1187 547H1200" />
      </g>
      <Arrow x={942} y={114.500} dir="r" color={PURPLE} />
      <Arrow x={991} y={114.500} dir="l" color={PURPLE} />
      <Arrow x={821.500} y={133} dir="u" color={PURPLE} />
      <Arrow x={821.500} y={538} dir="d" color={PURPLE} />
      <Arrow x={870} y={406} dir="u" color={PURPLE} />
      <Arrow x={870} y={538} dir="d" color={PURPLE} />
      <Arrow x={929} y={591} dir="l" color={PURPLE} />
      <Arrow x={1187} y={591} dir="r" color={PURPLE} />
      <g fill="#b79bd6" stroke="#8256b4" strokeWidth="0.700" className="font-['Liberation_Sans',Arial,sans-serif] text-[14px]" textAnchor="middle">
        <text x="961" y="120">270</text>
        <text x="815" y="341">2193</text>
        <text x="865" y="478">709</text>
        <text x="1052" y="596">1404</text>
      </g>
    </svg>
  );
}

function RightWindow() {
  return (
    <section className="flex min-w-0 flex-1 flex-col overflow-hidden border-t border-[#8b8b8b] bg-white">
      <header className="flex h-[26px] shrink-0 items-center pt-1 pl-[6px]">
        <Svg className="size-[14px]"><path d="M1 1l5 3 4 5 5-3-1 6-6 4-6-3z" fill="#2f8585" /><path d="M3 4l5 4-4 2z" fill="#f0b03a" /><path d="M2 12l6 2 5-3-1 3-5 2z" fill="#2b4f86" /><path d="M9 6l4-1-2 4z" fill="#4fae55" /></Svg>
        <h2 className="min-w-0 flex-1 truncate pr-1.5 text-center text-[10px] text-[#222]">Teamcenter Visualization Mockup 12.0 - [MF500-1524/A;1-RESERVOIR]</h2>
        <Tool label="Minimize visualization" className="mr-4 w-4"><span className="h-1 w-[9px] border border-[#666]" /></Tool>
      </header>
      <nav className="ml-[6px] flex h-[18px] shrink-0 items-stretch bg-[#dfdfdf] text-[9px] text-[#333]">
        <button type="button" className="w-[45px] shrink-0 bg-[#4c9fb8] text-white">File</button>
        <div className="grid w-[460px] shrink-0 grid-cols-13">
          {ribbonTabs.map((t) => (
            <button key={t} type="button" className="flex items-center justify-center overflow-hidden border-r border-[#d2d2d2] whitespace-nowrap">
              {t}
            </button>
          ))}
        </div>
        <div className="flex items-center gap-1 pl-3">
          <Tool label="Minimize ribbon" className="w-3"><Svg className="size-2"><path d="M2 3h12v4l-6 6-6-6z" stroke="#555" strokeWidth="1.500" /></Svg></Tool>
          <Tool label="Full screen" className="w-3.5"><Svg className="size-3.5"><path d="M1 4V1h3M12 1h3v3M15 12v3h-3M4 15H1v-3" stroke="#666" strokeWidth="1.500" /><path d="M3 3h10v9H3z" fill="#b9d6f5" stroke="#35619f" strokeWidth="1.500" /><path d="M5 5h6v3H5z" fill="#3f7bc9" /></Svg></Tool>
          <Tool label="Help" className="size-3 rounded-full bg-[#3f68c8] text-[9px] font-bold text-white">?</Tool>
        </div>
      </nav>
      <div className="ml-[6px] flex h-[17px] shrink-0 items-center gap-1 border-b border-[#dde3ea] bg-[#f0f4fa] pl-1">
        <Tool label="Undo" className="w-3"><Svg className="size-2.5"><path d="M1 3v6h6M2 8c4-7 12-4 11 1-.500 3-3 5-6 5" stroke="#1f3fb4" strokeWidth="3" /></Svg></Tool>
        <Tool label="Redo" className="w-3"><Svg className="size-2.5"><path d="M15 3v6H9m5-1C10 1 2 4 3 9c.500 3 3 5 6 5" stroke="#8ea4e4" strokeWidth="2.500" /></Svg></Tool>
        <Tool label="Customize" className="ml-1.5 w-3"><Svg className="size-2"><path d="M2 3h12M3 8h10l-5 5z" stroke="#444" fill="#444" strokeWidth="1.500" /></Svg></Tool>
      </div>
      <div className="ml-[6px] flex h-5 shrink-0 items-center">
        <button type="button" className="flex w-[57px] shrink-0 items-center gap-1 pl-2 text-[9px] text-[#222]">
          <Svg className="size-3"><path d="M0 3h14v4H0z" fill="#7b8fd0" /><path d="M2 8h11v6H4z" fill="#a9b2cf" stroke="#5b6a9c" /><path d="M8 8l6 5" stroke="#445" strokeWidth="1.500" /></Svg>
          Menu
        </button>
        <span className="flex w-2 shrink-0 justify-center"><span className="h-3 w-px bg-[#888]" /></span>
        {bar.map((b, i) =>
          b === "sep" ? (
            <span key={i} className="flex w-2 shrink-0 justify-center"><span className="h-3 w-px bg-[#555]" /></span>
          ) : (
            <Tool key={i} label={b.name} className={`h-[17px] w-[18px] ${b.on ? "bg-[#cfe6e0]" : ""}`}>
              <Svg className="size-3.5">{b.art}</Svg>
            </Tool>
          ),
        )}
      </div>
      <div className="flex min-h-0 flex-1 pt-px pl-[6px]">
        <Workspace />
        <main className="ml-[3px] min-w-0 flex-1 border-t border-l-2 border-[#858585] bg-linear-to-b from-[#afb1b2] via-[#cfd1d3] via-55% to-[#e4e6e7]">
          <RightDrawing />
        </main>
      </div>
      <footer className="flex h-[22px] shrink-0 items-center border-t border-b border-[#c5ccd6] bg-linear-to-b from-[#f7f8fb] to-[#e3e7ee] text-[9px] whitespace-nowrap text-[#333]">
        <span className="min-w-0 flex-1" />
        <span className="flex h-4 w-[201px] shrink-0 items-center border-l border-[#c3c7ce] pl-0.5">For Help, press F1</span>
        <span className="flex h-4 w-[102px] shrink-0 items-center border-l border-[#c3c7ce] pl-1">Mem: 448.1M/32524.8M</span>
      </footer>
    </section>
  );
}

export default function App() {
  return (
    <div className="flex h-screen min-h-[560px] w-full overflow-hidden bg-white font-['Noto_Sans','Open_Sans',sans-serif]">
      <LeftWindow />
      <RightWindow />
    </div>
  );
}
